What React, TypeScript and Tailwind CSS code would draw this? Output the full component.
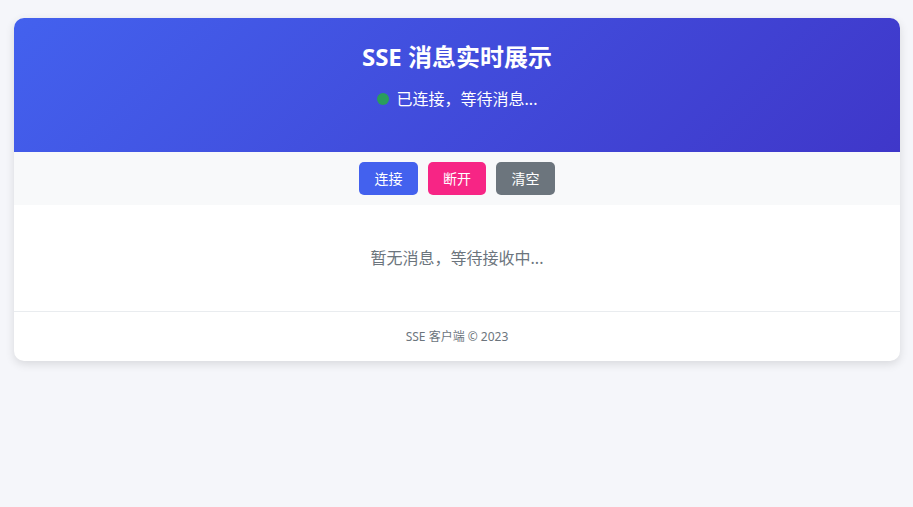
import { useState } from 'react'

export default function App() {
  const [connected] = useState(true)

  return (
    <div
      className="min-h-[507px] bg-[#f5f6fa] pl-[14px] pr-[13px] pt-[18px]"
      style={{ fontFamily: '"Segoe UI", "Noto Sans", "Noto Sans CJK SC", sans-serif' }}
    >
      <div className="overflow-hidden rounded-[10px] bg-white shadow-[0_3px_10px_rgba(0,0,0,0.12)]">
        <div className="flex h-[134px] flex-col items-center bg-[linear-gradient(135deg,#4361ee,#3f37c9)] pt-[21px] text-white">
          <h1 className="h-[36px] text-[24px] font-bold leading-[36px]">SSE 消息实时展示</h1>
          <div className="mt-[12px] flex h-[24px] items-center gap-[8px] text-[16px] leading-[24px]">
            <span className={`h-[12px] w-[12px] rounded-full ${connected ? 'bg-[#2a9d5c]' : 'bg-[#e63946]'}`} />
            <span>已连接，等待消息...</span>
          </div>
        </div>

        <div className="flex h-[53px] items-center justify-center gap-[10px] bg-[#f8f9fa]">
          <button className="h-[33px] w-[59px] rounded-[5px] bg-[#4361ee] text-[14px] text-white">连接</button>
          <button className="h-[33px] w-[58px] rounded-[5px] bg-[#f72585] text-[14px] text-white">断开</button>
          <button className="h-[33px] w-[59px] rounded-[5px] bg-[#6c757d] text-[14px] text-white">清空</button>
        </div>

        <div className="flex h-[106px] items-center justify-center text-[16px] text-[#6c757d]">
          暂无消息，等待接收中...
        </div>

        <div className="flex h-[50px] items-center justify-center border-t border-[#e9ecef] text-[12px] text-[#6c757d]">
          SSE 客户端 © 2023
        </div>
      </div>
    </div>
  )
}
